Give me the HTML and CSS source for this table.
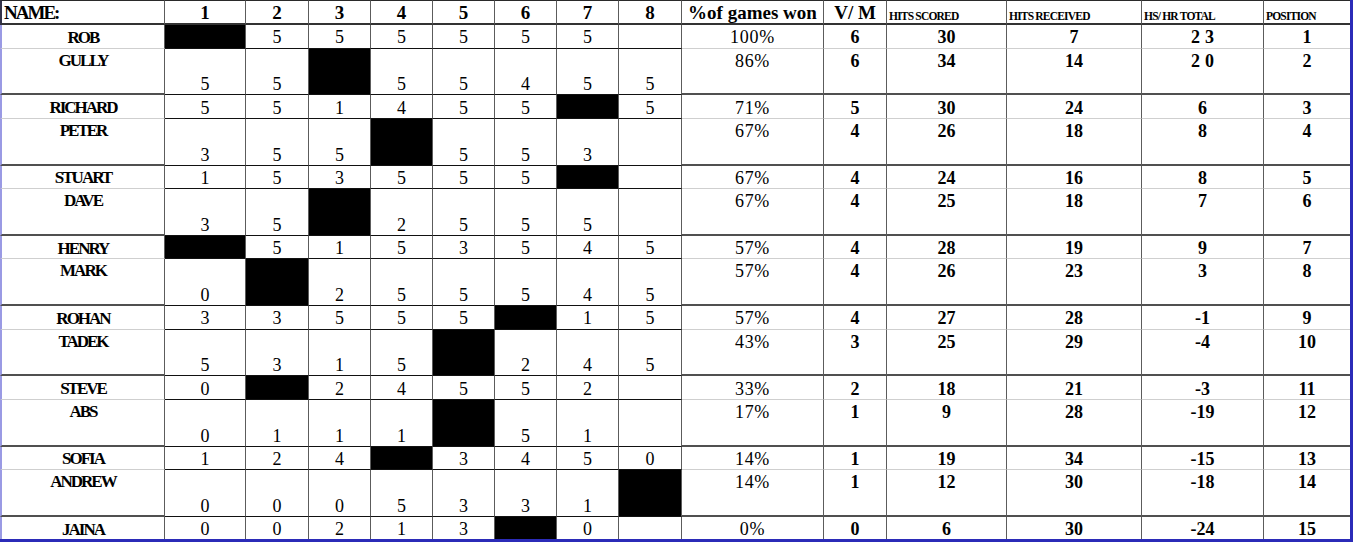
FILE: index.html
```html
<!DOCTYPE html>
<html>
<head>
<meta charset="utf-8">
<title>League table</title>
<link rel="stylesheet" href="styles.css">
</head>
<body>
<div class="sheet">
  <div class="row head">
    <div class="c hn">NAME:</div>
    <div class="c hg">1</div><div class="c hg">2</div><div class="c hg">3</div><div class="c hg">4</div>
    <div class="c hg">5</div><div class="c hg">6</div><div class="c hg">7</div><div class="c hg">8</div>
    <div class="c hg">%of games won</div>
    <div class="c hg">V/ M</div>
    <div class="c hs">HITS SCORED</div>
    <div class="c hs">HITS RECEIVED</div>
    <div class="c hs">HS/ HR TOTAL</div>
    <div class="c hs">POSITION</div>
  </div>

  <div class="row single">
    <div class="c n">ROB</div>
    <div class="c g x"></div><div class="c g">5</div><div class="c g">5</div><div class="c g">5</div><div class="c g">5</div><div class="c g">5</div><div class="c g">5</div><div class="c g"></div>
    <div class="c p">100%</div><div class="c s">6</div><div class="c s">30</div><div class="c s">7</div><div class="c s wide">23</div><div class="c s">1</div>
  </div>
  <div class="row double">
    <div class="c n">GULLY</div>
    <div class="c g">5</div><div class="c g">5</div><div class="c g x"></div><div class="c g">5</div><div class="c g">5</div><div class="c g">4</div><div class="c g">5</div><div class="c g">5</div>
    <div class="c p">86%</div><div class="c s">6</div><div class="c s">34</div><div class="c s">14</div><div class="c s wide">20</div><div class="c s">2</div>
  </div>
  <div class="row single">
    <div class="c n">RICHARD</div>
    <div class="c g">5</div><div class="c g">5</div><div class="c g">1</div><div class="c g">4</div><div class="c g">5</div><div class="c g">5</div><div class="c g x"></div><div class="c g">5</div>
    <div class="c p">71%</div><div class="c s">5</div><div class="c s">30</div><div class="c s">24</div><div class="c s">6</div><div class="c s">3</div>
  </div>
  <div class="row double">
    <div class="c n">PETER</div>
    <div class="c g">3</div><div class="c g">5</div><div class="c g">5</div><div class="c g x"></div><div class="c g">5</div><div class="c g">5</div><div class="c g">3</div><div class="c g"></div>
    <div class="c p">67%</div><div class="c s">4</div><div class="c s">26</div><div class="c s">18</div><div class="c s">8</div><div class="c s">4</div>
  </div>
  <div class="row single">
    <div class="c n">STUART</div>
    <div class="c g">1</div><div class="c g">5</div><div class="c g">3</div><div class="c g">5</div><div class="c g">5</div><div class="c g">5</div><div class="c g x"></div><div class="c g"></div>
    <div class="c p">67%</div><div class="c s">4</div><div class="c s">24</div><div class="c s">16</div><div class="c s">8</div><div class="c s">5</div>
  </div>
  <div class="row double">
    <div class="c n">DAVE</div>
    <div class="c g">3</div><div class="c g">5</div><div class="c g x"></div><div class="c g">2</div><div class="c g">5</div><div class="c g">5</div><div class="c g">5</div><div class="c g"></div>
    <div class="c p">67%</div><div class="c s">4</div><div class="c s">25</div><div class="c s">18</div><div class="c s">7</div><div class="c s">6</div>
  </div>
  <div class="row single">
    <div class="c n">HENRY</div>
    <div class="c g x"></div><div class="c g">5</div><div class="c g">1</div><div class="c g">5</div><div class="c g">3</div><div class="c g">5</div><div class="c g">4</div><div class="c g">5</div>
    <div class="c p">57%</div><div class="c s">4</div><div class="c s">28</div><div class="c s">19</div><div class="c s">9</div><div class="c s">7</div>
  </div>
  <div class="row double">
    <div class="c n">MARK</div>
    <div class="c g">0</div><div class="c g x"></div><div class="c g">2</div><div class="c g">5</div><div class="c g">5</div><div class="c g">5</div><div class="c g">4</div><div class="c g">5</div>
    <div class="c p">57%</div><div class="c s">4</div><div class="c s">26</div><div class="c s">23</div><div class="c s">3</div><div class="c s">8</div>
  </div>
  <div class="row single">
    <div class="c n">ROHAN</div>
    <div class="c g">3</div><div class="c g">3</div><div class="c g">5</div><div class="c g">5</div><div class="c g">5</div><div class="c g x"></div><div class="c g">1</div><div class="c g">5</div>
    <div class="c p">57%</div><div class="c s">4</div><div class="c s">27</div><div class="c s">28</div><div class="c s">-1</div><div class="c s">9</div>
  </div>
  <div class="row double">
    <div class="c n">TADEK</div>
    <div class="c g">5</div><div class="c g">3</div><div class="c g">1</div><div class="c g">5</div><div class="c g x"></div><div class="c g">2</div><div class="c g">4</div><div class="c g">5</div>
    <div class="c p">43%</div><div class="c s">3</div><div class="c s">25</div><div class="c s">29</div><div class="c s">-4</div><div class="c s">10</div>
  </div>
  <div class="row single">
    <div class="c n">STEVE</div>
    <div class="c g">0</div><div class="c g x"></div><div class="c g">2</div><div class="c g">4</div><div class="c g">5</div><div class="c g">5</div><div class="c g">2</div><div class="c g"></div>
    <div class="c p">33%</div><div class="c s">2</div><div class="c s">18</div><div class="c s">21</div><div class="c s">-3</div><div class="c s">11</div>
  </div>
  <div class="row double">
    <div class="c n">ABS</div>
    <div class="c g">0</div><div class="c g">1</div><div class="c g">1</div><div class="c g">1</div><div class="c g x"></div><div class="c g">5</div><div class="c g">1</div><div class="c g"></div>
    <div class="c p">17%</div><div class="c s">1</div><div class="c s">9</div><div class="c s">28</div><div class="c s">-19</div><div class="c s">12</div>
  </div>
  <div class="row single">
    <div class="c n">SOFIA</div>
    <div class="c g">1</div><div class="c g">2</div><div class="c g">4</div><div class="c g x"></div><div class="c g">3</div><div class="c g">4</div><div class="c g">5</div><div class="c g">0</div>
    <div class="c p">14%</div><div class="c s">1</div><div class="c s">19</div><div class="c s">34</div><div class="c s">-15</div><div class="c s">13</div>
  </div>
  <div class="row double">
    <div class="c n">ANDREW</div>
    <div class="c g">0</div><div class="c g">0</div><div class="c g">0</div><div class="c g">5</div><div class="c g">3</div><div class="c g">3</div><div class="c g">1</div><div class="c g x"></div>
    <div class="c p">14%</div><div class="c s">1</div><div class="c s">12</div><div class="c s">30</div><div class="c s">-18</div><div class="c s">14</div>
  </div>
  <div class="row single last">
    <div class="c n">JAINA</div>
    <div class="c g">0</div><div class="c g">0</div><div class="c g">2</div><div class="c g">1</div><div class="c g">3</div><div class="c g x"></div><div class="c g">0</div><div class="c g"></div>
    <div class="c p">0%</div><div class="c s">0</div><div class="c s">6</div><div class="c s">30</div><div class="c s">-24</div><div class="c s">15</div>
  </div>
</div>
</body>
</html>
```

FILE: styles.css
```css
html, body {
  margin: 0;
  padding: 0;
  background: #ffffff;
}

body {
  font-family: "Liberation Serif", "Times New Roman", "DejaVu Serif", serif;
  color: #000000;
}

.sheet {
  width: 1353px;
  box-sizing: border-box;
  border-right: 3px solid #2b2bb8;
  border-bottom: 3px solid #2b2bb8;
}

.row {
  display: grid;
  grid-template-columns: 165px 81px 63px 62px 62px 62px 62px 62px 63px 142px 63px 120px 135px 122px 86px;
}

.row.head { height: 25px; }
.row.single { height: 23.5px; }
.row.double { height: 46.75px; }
.row.last { height: 22.5px; }

.c {
  box-sizing: border-box;
  display: flex;
  align-items: center;
  justify-content: center;
  border-right: 1px solid #5c5c5c;
  border-bottom: 1px solid #111111;
  white-space: nowrap;
  overflow: hidden;
  line-height: 1;
}

.c:last-child { border-right: none; }

/* header */
.head .c {
  border-top: 1px solid #2a2a2a;
  border-bottom: 2px solid #333333;
  font-weight: bold;
}

.hn {
  justify-content: flex-start;
  padding-left: 2px;
  font-size: 19px;
  letter-spacing: -2px;
  border-left: 2px solid #33334a;
}

.hg {
  font-size: 19px;
}

.hs {
  justify-content: flex-start;
  align-items: flex-end;
  padding-left: 2px;
  padding-bottom: 1px;
  font-size: 11.5px;
  letter-spacing: -0.8px;
}

/* body cells */
.n {
  font-weight: bold;
  font-size: 17px;
  letter-spacing: -2px;
  border-left: 2px solid #9a9ae4;
}

.g {
  font-size: 18px;
}

.x {
  background: #000000;
}

.p {
  font-size: 18px;
  letter-spacing: 0.7px;
}

.s {
  font-weight: bold;
  font-size: 18px;
}

.s.wide {
  letter-spacing: 0.28em;
  padding-left: 0.28em;
}

.single .c {
  padding-top: 2px;
}

/* row separators in name and stats columns */
.single .n, .single .p, .single .s {
  border-bottom: 1px solid #cfcfcf;
}

.double .n, .double .p, .double .s {
  border-bottom: 2px solid #505050;
  align-items: flex-start;
  padding-top: 3px;
}

.double .g {
  align-items: flex-end;
  padding-bottom: 1px;
}

.last .c {
  border-bottom: none;
}
```
